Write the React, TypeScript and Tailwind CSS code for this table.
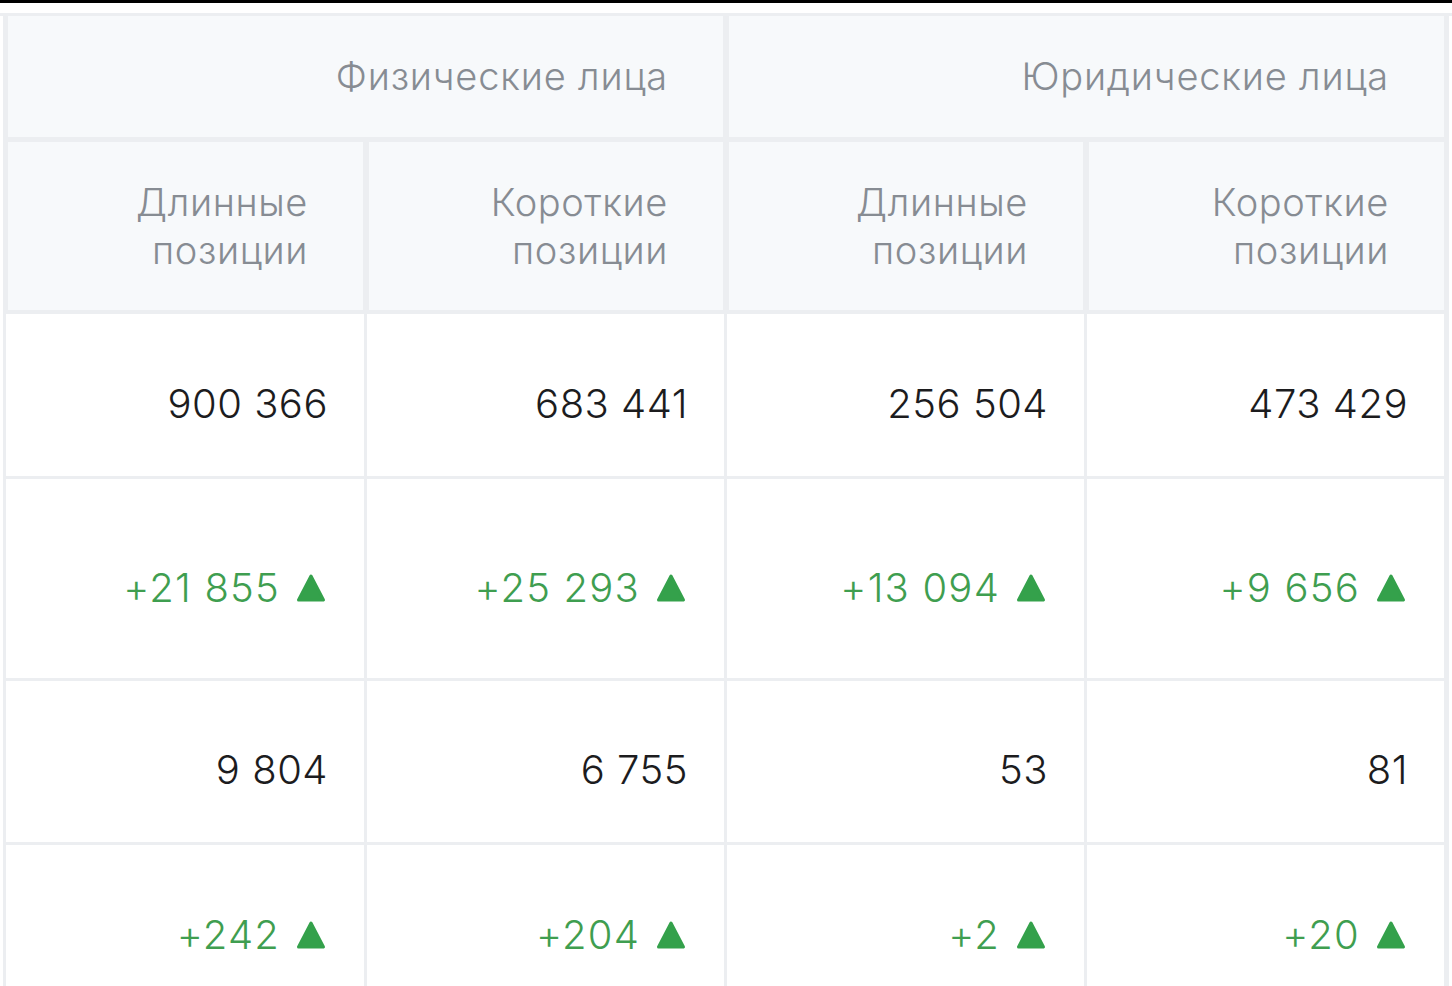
import React from "react";

const font = { fontFamily: "Inter, 'Noto Sans', sans-serif" };

const Up = () => (
  <svg width="30" height="30" viewBox="0 0 30 30" className="shrink-0">
    <path
      d="M15 3 L27.5 27 L2.5 27 Z"
      fill="#34a14b"
      stroke="#34a14b"
      strokeWidth="3"
      strokeLinejoin="round"
    />
  </svg>
);

const rows = [
  { h: "h-[162px]", pt: "pt-[18px]", kind: "num", vals: ["900 366", "683 441", "256 504", "473 429"] },
  { h: "h-[199px]", pt: "pt-[18px]", kind: "delta", vals: ["+21 855", "+25 293", "+13 094", "+9 656"] },
  { h: "h-[161px]", pt: "pt-[17px]", kind: "num", vals: ["9 804", "6 755", "53", "81"] },
  { h: "h-[170px]", pt: "pt-[10px]", kind: "delta", vals: ["+242", "+204", "+2", "+20"] },
];

const bodyWidths = ["w-[358px]", "w-[357px]", "w-[357px]", "w-[357px]"];
const headWidths = ["w-[355px]", "w-[354px]", "w-[354px]", "w-[355px]"];

export default function App() {
  return (
    <div className="w-full h-[986px] overflow-hidden bg-white" style={font}>
      <div className="h-[3px] bg-black" />
      <div className="h-[10px]" />
      <div className="h-[3px] bg-[#eceef1]" />

      <div className="ml-[3px] w-[1446px]">
        {/* header */}
        <div className="flex flex-col gap-[5px] bg-[#eceef1] px-[5px] pb-[4px]">
          <div className="flex gap-[6px]">
            {["Физические лица", "Юридические лица"].map((t) => (
              <div
                key={t}
                className="w-[715px] h-[121px] bg-[#f7f9fb] flex items-center justify-end pr-[55px] text-[38px] font-[350] text-[#878c93] tracking-[0.8px]"
              >
                {t}
              </div>
            ))}
          </div>
          <div className="flex gap-[6px]">
            {["Длинные", "Короткие", "Длинные", "Короткие"].map((t, i) => (
              <div
                key={i}
                className={`${headWidths[i]} h-[168px] bg-[#f7f9fb] flex flex-col items-end justify-center pr-[55px] text-[38px] leading-[48px] font-[350] text-[#878c93] text-right tracking-[0.6px]`}
              >
                <span>{t}</span>
                <span>позиции</span>
              </div>
            ))}
          </div>
        </div>

        {/* body */}
        <div className="flex flex-col gap-[3px] bg-[#eceef1] pl-[3px] pr-[5px]">
          {rows.map((r, ri) => (
            <div key={ri} className="flex gap-[3px]">
              {r.vals.map((v, ci) => (
                <div
                  key={ci}
                  className={`${bodyWidths[ci]} ${r.h} ${r.pt} bg-white flex items-center justify-end pr-[38px] text-[40px] font-[350] tracking-[0.5px]`}
                >
                  {r.kind === "num" ? (
                    <span className="text-[#1c1c1e] mr-[-2px]">{v}</span>
                  ) : (
                    <span className="flex items-center gap-[16px] text-[#3f9e50] tracking-[1.2px]">
                      {v}
                      <Up />
                    </span>
                  )}
                </div>
              ))}
            </div>
          ))}
        </div>
      </div>
    </div>
  );
}
